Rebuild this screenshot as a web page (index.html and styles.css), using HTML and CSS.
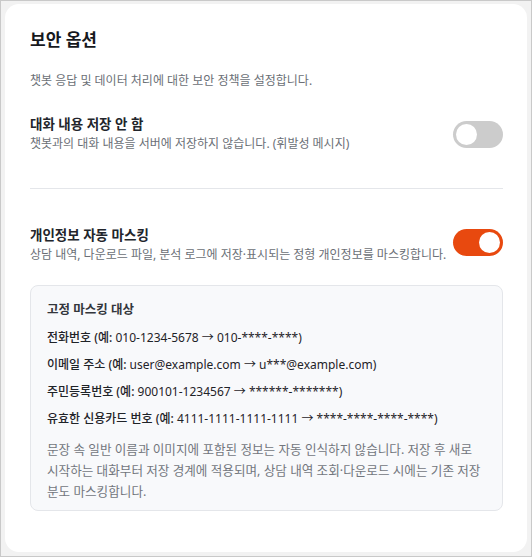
FILE: index.html
```html
<!DOCTYPE html>
<html lang="ko">
  <head>
    <meta charset="UTF-8" />
    <meta name="viewport" content="width=device-width, initial-scale=1.0" />
    <title>보안 옵션</title>
    <link rel="stylesheet" href="styles.css">
  </head>
  <body>
    <div class="frame">
      <div class="card">
        <h1>보안 옵션</h1>
        <p class="intro">챗봇 응답 및 데이터 처리에 대한 보안 정책을 설정합니다.</p>

        <div class="option">
          <div class="option-text">
            <div class="option-title">대화 내용 저장 안 함</div>
            <div class="option-desc">챗봇과의 대화 내용을 서버에 저장하지 않습니다. (휘발성 메시지)</div>
          </div>
          <span class="toggle"><span class="knob"></span></span>
        </div>

        <hr class="divider" />

        <div class="option option-masking">
          <div class="option-text">
            <div class="option-title">개인정보 자동 마스킹</div>
            <div class="option-desc">상담 내역, 다운로드 파일, 분석 로그에 저장·표시되는 정형 개인정보를 마스킹합니다.</div>
          </div>
          <span class="toggle on"><span class="knob"></span></span>
        </div>

        <div class="mask-box">
          <div class="mask-heading">고정 마스킹 대상</div>
          <ul class="mask-list">
            <li><b>전화번호 (예:</b> 010-1234-5678 → 010-****-****)</li>
            <li><b>이메일 주소 (예:</b> user@example.com → u***@example.com)</li>
            <li><b>주민등록번호 (예:</b> 900101-1234567 → ******-*******)</li>
            <li><b>유효한 신용카드 번호 (예:</b> 4111-1111-1111-1111 → ****-****-****-****)</li>
          </ul>
          <p class="mask-note">문장 속 일반 이름과 이미지에 포함된 정보는 자동 인식하지 않습니다. 저장 후 새로 시작하는 대화부터 저장 경계에 적용되며, 상담 내역 조회·다운로드 시에는 기존 저장분도 마스킹합니다.</p>
        </div>
      </div>
    </div>
  </body>
</html>
```

FILE: styles.css
```css
* {
  margin: 0;
  padding: 0;
  box-sizing: border-box;
}

body {
  font-family: "Noto Sans", "Noto Sans CJK KR", sans-serif;
  background: #f2f2f2;
  color: #1f2328;
}

.frame {
  height: 557px;
  border: 1px solid #c9c9c9;
  padding: 3px 4px 4px 4px;
}

.card {
  background: #ffffff;
  border-radius: 14px;
  height: 100%;
  padding: 24px 24px 0 25px;
}

h1 {
  font-size: 17px;
  line-height: 24px;
  font-weight: 700;
  color: #16181d;
}

.intro {
  margin-top: 20px;
  font-size: 12px;
  line-height: 18px;
  color: #6b6f76;
}

.option {
  margin-top: 24px;
  display: flex;
  align-items: center;
  justify-content: space-between;
}

.option-title {
  font-size: 13.5px;
  line-height: 20px;
  font-weight: 700;
  color: #22252b;
}

.option-desc {
  margin-top: 1px;
  font-size: 12px;
  line-height: 18px;
  color: #6b6f76;
}

.toggle {
  flex-shrink: 0;
  width: 50px;
  height: 27px;
  border-radius: 14px;
  background: #cccccc;
  padding: 3px;
  display: flex;
  margin-top: 2px;
}

.knob {
  width: 21px;
  height: 21px;
  border-radius: 50%;
  background: #ffffff;
}

.toggle.on {
  background: #e8490f;
  justify-content: flex-end;
  margin-top: -4px;
}

.divider {
  margin-top: 35px;
  border: none;
  border-top: 1px solid #e4e6ea;
}

.option-masking {
  margin-top: 36px;
}

.mask-box {
  margin-top: 21px;
  background: #f8f9fb;
  border: 1px solid #e4e6ea;
  border-radius: 8px;
  padding: 15px 20px 8px 16px;
}

.mask-heading {
  font-size: 12.5px;
  line-height: 18px;
  font-weight: 600;
  color: #33363c;
}

.mask-list {
  list-style: none;
  margin-top: 9px;
  display: flex;
  flex-direction: column;
  gap: 7px;
}

.mask-list li {
  font-size: 12px;
  line-height: 20px;
  color: #1f2328;
}

.mask-list b {
  font-weight: 500;
}

.mask-note {
  margin-top: 10px;
  font-size: 12.6px;
  line-height: 21px;
  color: #72767d;
}
```
